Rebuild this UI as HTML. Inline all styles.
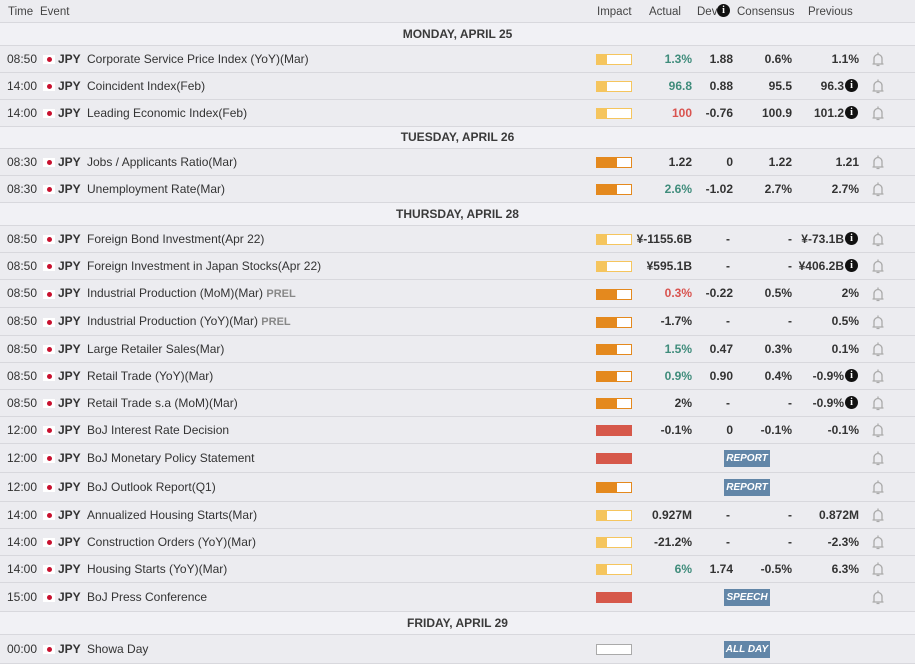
<!DOCTYPE html>
<html><head><meta charset="utf-8"><style>
*{margin:0;padding:0;box-sizing:border-box}
body{width:915px;height:665px;background:#fff;font-family:"Liberation Sans",Arial,sans-serif;font-size:12px;color:#333;position:relative;overflow:hidden}
.r{position:absolute;left:0;width:915px;background:#ececf0;border-bottom:1px solid #d8d8dd;white-space:nowrap}
.r>span,.r>div,.r>svg{position:absolute;top:0;height:100%}
.dh{background:#f1f1f5;text-align:center;font-weight:bold;font-size:12px;color:#3a3a3a}
.hd{background:#ececf0;color:#444;font-size:11.5px}
.t{left:7px}
.f{left:43px;width:12px;height:9px!important;top:50%!important;margin-top:-4px;background:#fff}
.f:after{content:"";position:absolute;left:4px;top:2px;width:5px;height:5px;border-radius:50%;background:#c8102e}
.c{left:58px;font-weight:bold}
.e{left:87px}
.pr{color:#888;font-weight:bold;font-size:11px}
.imp{left:596px;width:36px;height:11px!important;top:50%!important;margin-top:-5px;background:#fff}
.lo{border:1px solid #f5c55e}.lo i{display:block;width:10px;height:100%;background:#f5c55e}
.me{border:1px solid #e4891e}.me i{display:block;width:20px;height:100%;background:#e4891e}
.hi{background:#d6584a}
.no{border:1px solid #aaa}
.a{right:223px;font-weight:bold}
.d{right:182px;font-weight:bold}
.cs{right:123px;font-weight:bold}
.p{right:56px;font-weight:bold}
.pi{right:71px;font-weight:bold}
.g{color:#3f8c7b}.rd{color:#d9534f}
.ic{left:845px;width:13px;height:13px!important;top:50%!important;margin-top:-7px;border-radius:50%;background:#111;color:#fff;font-size:10px;font-weight:bold;display:flex;align-items:center;justify-content:center;font-family:"Liberation Serif",serif}
.bl{left:871px;width:14px;height:16px!important;top:50%!important;margin-top:-8px}
.bg{left:724px;width:46px;height:17px!important;top:50%!important;margin-top:-8px;background:#6286a8;color:#fff;font-size:10px;font-weight:bold;font-style:italic;text-align:center}
.bg b{display:block;line-height:18px;font-weight:bold}
</style></head><body>
<div class="r hd" style="top:0;height:23px;line-height:24px"><span style="left:8px">Time</span><span style="left:40px">Event</span><span style="left:597px">Impact</span><span style="left:649px">Actual</span><span style="left:697px">Dev</span><span class="ic" style="left:717px;margin-top:-7px">i</span><span style="left:737px">Consensus</span><span style="left:808px">Previous</span></div>

<div class="r dh" style="top:23px;height:23px;line-height:22px"><span style="left:0;width:915px">MONDAY, APRIL 25</span></div>
<div class="r" style="top:46px;height:27px;line-height:26px"><span class="t">08:50</span><span class="f"></span><span class="c">JPY</span><span class="e">Corporate Service Price Index (YoY)(Mar)</span><div class="imp lo"><i></i></div><span class="a g">1.3%</span><span class="d">1.88</span><span class="cs">0.6%</span><span class="p">1.1%</span><svg class="bl" viewBox="0 0 14 16"><path d="M1.5 13h11M3 13V7.5a4 4 0 0 1 8 0V13M7 1.5v2M5.5 14.5h3" fill="none" stroke="#aaa" stroke-width="1.3"/></svg></div>
<div class="r" style="top:73px;height:27px;line-height:26px"><span class="t">14:00</span><span class="f"></span><span class="c">JPY</span><span class="e">Coincident Index(Feb)</span><div class="imp lo"><i></i></div><span class="a g">96.8</span><span class="d">0.88</span><span class="cs">95.5</span><span class="pi">96.3</span><span class="ic">i</span><svg class="bl" viewBox="0 0 14 16"><path d="M1.5 13h11M3 13V7.5a4 4 0 0 1 8 0V13M7 1.5v2M5.5 14.5h3" fill="none" stroke="#aaa" stroke-width="1.3"/></svg></div>
<div class="r" style="top:100px;height:27px;line-height:26px"><span class="t">14:00</span><span class="f"></span><span class="c">JPY</span><span class="e">Leading Economic Index(Feb)</span><div class="imp lo"><i></i></div><span class="a rd">100</span><span class="d">-0.76</span><span class="cs">100.9</span><span class="pi">101.2</span><span class="ic">i</span><svg class="bl" viewBox="0 0 14 16"><path d="M1.5 13h11M3 13V7.5a4 4 0 0 1 8 0V13M7 1.5v2M5.5 14.5h3" fill="none" stroke="#aaa" stroke-width="1.3"/></svg></div>

<div class="r dh" style="top:127px;height:22px;line-height:21px"><span style="left:0;width:915px">TUESDAY, APRIL 26</span></div>
<div class="r" style="top:149px;height:27px;line-height:26px"><span class="t">08:30</span><span class="f"></span><span class="c">JPY</span><span class="e">Jobs / Applicants Ratio(Mar)</span><div class="imp me"><i></i></div><span class="a">1.22</span><span class="d">0</span><span class="cs">1.22</span><span class="p">1.21</span><svg class="bl" viewBox="0 0 14 16"><path d="M1.5 13h11M3 13V7.5a4 4 0 0 1 8 0V13M7 1.5v2M5.5 14.5h3" fill="none" stroke="#aaa" stroke-width="1.3"/></svg></div>
<div class="r" style="top:176px;height:27px;line-height:26px"><span class="t">08:30</span><span class="f"></span><span class="c">JPY</span><span class="e">Unemployment Rate(Mar)</span><div class="imp me"><i></i></div><span class="a g">2.6%</span><span class="d">-1.02</span><span class="cs">2.7%</span><span class="p">2.7%</span><svg class="bl" viewBox="0 0 14 16"><path d="M1.5 13h11M3 13V7.5a4 4 0 0 1 8 0V13M7 1.5v2M5.5 14.5h3" fill="none" stroke="#aaa" stroke-width="1.3"/></svg></div>

<div class="r dh" style="top:203px;height:23px;line-height:22px"><span style="left:0;width:915px">THURSDAY, APRIL 28</span></div>
<div class="r" style="top:226px;height:27px;line-height:26px"><span class="t">08:50</span><span class="f"></span><span class="c">JPY</span><span class="e">Foreign Bond Investment(Apr 22)</span><div class="imp lo"><i></i></div><span class="a">¥-1155.6B</span><span class="d" style="right:185px">-</span><span class="cs">-</span><span class="pi">¥-73.1B</span><span class="ic">i</span><svg class="bl" viewBox="0 0 14 16"><path d="M1.5 13h11M3 13V7.5a4 4 0 0 1 8 0V13M7 1.5v2M5.5 14.5h3" fill="none" stroke="#aaa" stroke-width="1.3"/></svg></div>
<div class="r" style="top:253px;height:27px;line-height:26px"><span class="t">08:50</span><span class="f"></span><span class="c">JPY</span><span class="e">Foreign Investment in Japan Stocks(Apr 22)</span><div class="imp lo"><i></i></div><span class="a">¥595.1B</span><span class="d" style="right:185px">-</span><span class="cs">-</span><span class="pi">¥406.2B</span><span class="ic">i</span><svg class="bl" viewBox="0 0 14 16"><path d="M1.5 13h11M3 13V7.5a4 4 0 0 1 8 0V13M7 1.5v2M5.5 14.5h3" fill="none" stroke="#aaa" stroke-width="1.3"/></svg></div>
<div class="r" style="top:280px;height:28px;line-height:27px"><span class="t">08:50</span><span class="f"></span><span class="c">JPY</span><span class="e">Industrial Production (MoM)(Mar) <b class="pr">PREL</b></span><div class="imp me"><i></i></div><span class="a rd">0.3%</span><span class="d">-0.22</span><span class="cs">0.5%</span><span class="p">2%</span><svg class="bl" viewBox="0 0 14 16"><path d="M1.5 13h11M3 13V7.5a4 4 0 0 1 8 0V13M7 1.5v2M5.5 14.5h3" fill="none" stroke="#aaa" stroke-width="1.3"/></svg></div>
<div class="r" style="top:308px;height:28px;line-height:27px"><span class="t">08:50</span><span class="f"></span><span class="c">JPY</span><span class="e">Industrial Production (YoY)(Mar) <b class="pr">PREL</b></span><div class="imp me"><i></i></div><span class="a">-1.7%</span><span class="d" style="right:185px">-</span><span class="cs">-</span><span class="p">0.5%</span><svg class="bl" viewBox="0 0 14 16"><path d="M1.5 13h11M3 13V7.5a4 4 0 0 1 8 0V13M7 1.5v2M5.5 14.5h3" fill="none" stroke="#aaa" stroke-width="1.3"/></svg></div>
<div class="r" style="top:336px;height:27px;line-height:26px"><span class="t">08:50</span><span class="f"></span><span class="c">JPY</span><span class="e">Large Retailer Sales(Mar)</span><div class="imp me"><i></i></div><span class="a g">1.5%</span><span class="d">0.47</span><span class="cs">0.3%</span><span class="p">0.1%</span><svg class="bl" viewBox="0 0 14 16"><path d="M1.5 13h11M3 13V7.5a4 4 0 0 1 8 0V13M7 1.5v2M5.5 14.5h3" fill="none" stroke="#aaa" stroke-width="1.3"/></svg></div>
<div class="r" style="top:363px;height:27px;line-height:26px"><span class="t">08:50</span><span class="f"></span><span class="c">JPY</span><span class="e">Retail Trade (YoY)(Mar)</span><div class="imp me"><i></i></div><span class="a g">0.9%</span><span class="d">0.90</span><span class="cs">0.4%</span><span class="pi">-0.9%</span><span class="ic">i</span><svg class="bl" viewBox="0 0 14 16"><path d="M1.5 13h11M3 13V7.5a4 4 0 0 1 8 0V13M7 1.5v2M5.5 14.5h3" fill="none" stroke="#aaa" stroke-width="1.3"/></svg></div>
<div class="r" style="top:390px;height:27px;line-height:26px"><span class="t">08:50</span><span class="f"></span><span class="c">JPY</span><span class="e">Retail Trade s.a (MoM)(Mar)</span><div class="imp me"><i></i></div><span class="a">2%</span><span class="d" style="right:185px">-</span><span class="cs">-</span><span class="pi">-0.9%</span><span class="ic">i</span><svg class="bl" viewBox="0 0 14 16"><path d="M1.5 13h11M3 13V7.5a4 4 0 0 1 8 0V13M7 1.5v2M5.5 14.5h3" fill="none" stroke="#aaa" stroke-width="1.3"/></svg></div>
<div class="r" style="top:417px;height:27px;line-height:26px"><span class="t">12:00</span><span class="f"></span><span class="c">JPY</span><span class="e">BoJ Interest Rate Decision</span><div class="imp hi"></div><span class="a">-0.1%</span><span class="d">0</span><span class="cs">-0.1%</span><span class="p">-0.1%</span><svg class="bl" viewBox="0 0 14 16"><path d="M1.5 13h11M3 13V7.5a4 4 0 0 1 8 0V13M7 1.5v2M5.5 14.5h3" fill="none" stroke="#aaa" stroke-width="1.3"/></svg></div>
<div class="r" style="top:444px;height:29px;line-height:28px"><span class="t">12:00</span><span class="f"></span><span class="c">JPY</span><span class="e">BoJ Monetary Policy Statement</span><div class="imp hi"></div><span class="bg"><b>REPORT</b></span><svg class="bl" viewBox="0 0 14 16"><path d="M1.5 13h11M3 13V7.5a4 4 0 0 1 8 0V13M7 1.5v2M5.5 14.5h3" fill="none" stroke="#aaa" stroke-width="1.3"/></svg></div>
<div class="r" style="top:473px;height:29px;line-height:28px"><span class="t">12:00</span><span class="f"></span><span class="c">JPY</span><span class="e">BoJ Outlook Report(Q1)</span><div class="imp me"><i></i></div><span class="bg"><b>REPORT</b></span><svg class="bl" viewBox="0 0 14 16"><path d="M1.5 13h11M3 13V7.5a4 4 0 0 1 8 0V13M7 1.5v2M5.5 14.5h3" fill="none" stroke="#aaa" stroke-width="1.3"/></svg></div>
<div class="r" style="top:502px;height:27px;line-height:26px"><span class="t">14:00</span><span class="f"></span><span class="c">JPY</span><span class="e">Annualized Housing Starts(Mar)</span><div class="imp lo"><i></i></div><span class="a">0.927M</span><span class="d" style="right:185px">-</span><span class="cs">-</span><span class="p">0.872M</span><svg class="bl" viewBox="0 0 14 16"><path d="M1.5 13h11M3 13V7.5a4 4 0 0 1 8 0V13M7 1.5v2M5.5 14.5h3" fill="none" stroke="#aaa" stroke-width="1.3"/></svg></div>
<div class="r" style="top:529px;height:27px;line-height:26px"><span class="t">14:00</span><span class="f"></span><span class="c">JPY</span><span class="e">Construction Orders (YoY)(Mar)</span><div class="imp lo"><i></i></div><span class="a">-21.2%</span><span class="d" style="right:185px">-</span><span class="cs">-</span><span class="p">-2.3%</span><svg class="bl" viewBox="0 0 14 16"><path d="M1.5 13h11M3 13V7.5a4 4 0 0 1 8 0V13M7 1.5v2M5.5 14.5h3" fill="none" stroke="#aaa" stroke-width="1.3"/></svg></div>
<div class="r" style="top:556px;height:27px;line-height:26px"><span class="t">14:00</span><span class="f"></span><span class="c">JPY</span><span class="e">Housing Starts (YoY)(Mar)</span><div class="imp lo"><i></i></div><span class="a g">6%</span><span class="d">1.74</span><span class="cs">-0.5%</span><span class="p">6.3%</span><svg class="bl" viewBox="0 0 14 16"><path d="M1.5 13h11M3 13V7.5a4 4 0 0 1 8 0V13M7 1.5v2M5.5 14.5h3" fill="none" stroke="#aaa" stroke-width="1.3"/></svg></div>
<div class="r" style="top:583px;height:29px;line-height:28px"><span class="t">15:00</span><span class="f"></span><span class="c">JPY</span><span class="e">BoJ Press Conference</span><div class="imp hi"></div><span class="bg"><b>SPEECH</b></span><svg class="bl" viewBox="0 0 14 16"><path d="M1.5 13h11M3 13V7.5a4 4 0 0 1 8 0V13M7 1.5v2M5.5 14.5h3" fill="none" stroke="#aaa" stroke-width="1.3"/></svg></div>

<div class="r dh" style="top:612px;height:23px;line-height:22px"><span style="left:0;width:915px">FRIDAY, APRIL 29</span></div>
<div class="r" style="top:635px;height:29px;line-height:28px"><span class="t">00:00</span><span class="f"></span><span class="c">JPY</span><span class="e">Showa Day</span><div class="imp no"></div><span class="bg"><b>ALL DAY</b></span></div>
</body></html>
